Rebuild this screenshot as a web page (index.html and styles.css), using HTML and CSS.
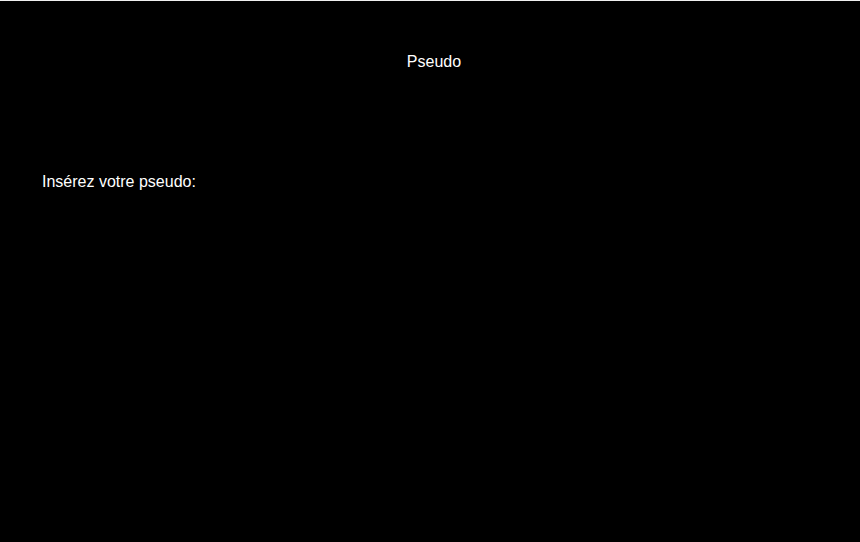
FILE: index.html
```html
<!DOCTYPE html>
<html lang="fr">
<head>
<meta charset="utf-8">
<title>Pseudo</title>
<link rel="stylesheet" href="styles.css">
</head>
<body>
<div class="screen">
  <h1 class="title">Pseudo</h1>
  <form class="form">
    <label class="label" for="pseudo">Insérez votre pseudo:</label>
  </form>
</div>
</body>
</html>
```
FILE: styles.css
```css
html, body {
  margin: 0;
  padding: 0;
  background: #000;
}
body {
  font-family: "Liberation Sans", Arial, sans-serif;
  font-size: 16px;
  color: #fff;
}
.screen {
  height: 541px;
  border-top: 1px solid #f0f0f0;
  background: #000;
  padding: 0 42px;
  box-sizing: border-box;
}
.title {
  margin: 52px 0 0 0;
  padding-left: 8px;
  font-size: 16px;
  font-weight: normal;
  line-height: 18px;
  text-align: center;
}
.form {
  margin-top: 102px;
}
.label {
  display: block;
  line-height: 18px;
}
```
